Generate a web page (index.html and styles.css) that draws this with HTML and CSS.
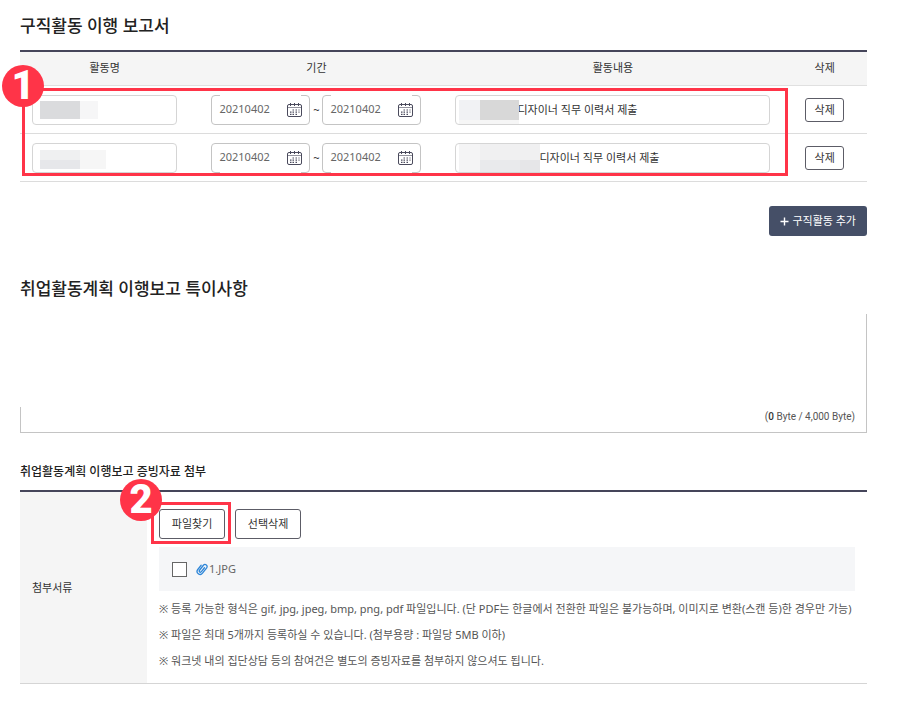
FILE: index.html
```
<!DOCTYPE html>
<html lang="ko">
<head>
<meta charset="utf-8">
<title>구직활동 이행 보고서</title>
<link rel="stylesheet" href="styles.css">
</head>
<body>
<svg class="sprite" aria-hidden="true">
  <symbol id="calendar" viewBox="0 0 16 16">
    <g fill="none" stroke="#4a4a5c">
      <rect x="1.5" y="2.5" width="14" height="12" rx="1.5"/>
      <path d="M2 5.5h13" stroke-opacity="0.6"/>
      <path d="M4.5 1v3M8.5 1v3M12.5 1v3"/>
      <path d="M6.5 8h1.5M9.5 8h1.5M12.5 8h1M4 10.2h1.5M6.5 10.2h1.5M9.5 10.2h1.5M12.5 10.2h1M4 12.4h1.5M6.5 12.4h1.5M9.5 12.4h1.5" stroke-width="1.2"/>
    </g>
  </symbol>
</svg>
<main class="page">
  <section class="report">
    <h1 class="title">구직활동 이행 보고서</h1>
    <div class="activity">
      <table class="grid">
        <colgroup><col class="col-name"><col class="col-period"><col class="col-content"><col class="col-delete"></colgroup>
        <thead>
          <tr><th scope="col">활동명</th><th scope="col">기간</th><th scope="col">활동내용</th><th scope="col">삭제</th></tr>
        </thead>
        <tbody>
          <tr>
            <td><div class="field">
              <input class="text" type="text" aria-label="활동명">
              <svg class="mosaic mosaic-name" width="66" height="18" aria-hidden="true"><path fill="#dadbdd" d="M0 0h40v18H0z"/><path fill="#f6f6f7" d="M40 0h18v18H40z"/></svg>
            </div></td>
            <td><div class="period">
              <span class="date open-top"><input type="text" value="20210402" aria-label="시작일"><button type="button" aria-label="시작일 선택"><svg width="16" height="16"><use href="#calendar"/></svg></button></span>
              <span class="tilde">~</span>
              <span class="date open-top"><input type="text" value="20210402" aria-label="종료일"><button type="button" aria-label="종료일 선택"><svg width="16" height="16"><use href="#calendar"/></svg></button></span>
            </div></td>
            <td><div class="field">
              <input class="text masked-short" type="text" value="디자이너 직무 이력서 제출" aria-label="활동내용">
              <svg class="mosaic mosaic-content" width="81" height="28" aria-hidden="true"><path fill="#f1f2f4" d="M0 4h21v20H0z"/><path fill="#d8d8d8" d="M21 4h39v20H21z"/><path fill="#f6f6f6" d="M0 24h60v4H0z"/></svg>
            </div></td>
            <td><button type="button" class="btn btn-small">삭제</button></td>
          </tr>
          <tr>
            <td><div class="field">
              <input class="text" type="text" aria-label="활동명">
              <svg class="mosaic mosaic-name" width="66" height="20" aria-hidden="true"><path fill="#eff0f1" d="M0 1h40v10H0z"/><path fill="#e6e7ea" d="M0 11h40v9H0z"/><path fill="#f6f6f6" d="M40 1h26v19H40z"/></svg>
            </div></td>
            <td><div class="period">
              <span class="date open-bottom"><input type="text" value="20210402" aria-label="시작일"><button type="button" aria-label="시작일 선택"><svg width="16" height="16"><use href="#calendar"/></svg></button></span>
              <span class="tilde">~</span>
              <span class="date open-bottom"><input type="text" value="20210402" aria-label="종료일"><button type="button" aria-label="종료일 선택"><svg width="16" height="16"><use href="#calendar"/></svg></button></span>
            </div></td>
            <td><div class="field">
              <input class="text masked-long" type="text" value="디자이너 직무 이력서 제출" aria-label="활동내용">
              <svg class="mosaic mosaic-content" width="81" height="28" aria-hidden="true"><path fill="#f4f4f5" d="M0 0h21v28H0z"/><path fill="#f0f0f1" d="M21 0h60v16H21z"/><path fill="#e9eaec" d="M21 16h40v12H21z"/><path fill="#e6e6e8" d="M61 16h20v12H61z"/></svg>
            </div></td>
            <td><button type="button" class="btn btn-small">삭제</button></td>
          </tr>
        </tbody>
      </table>
      <div class="callout callout-rows"><span class="badge">1</span></div>
    </div>
    <div class="actions"><button type="button" class="btn-add"><svg width="9" height="9" viewBox="0 0 9 9" aria-hidden="true"><path d="M4.5 0.5v8M0.5 4.5h8" stroke="#fff" stroke-width="1.4"/></svg>구직활동 추가</button></div>
  </section>

  <section class="remarks">
    <h2 class="title"><label for="remarks">취업활동계획 이행보고 특이사항</label></h2>
    <div class="memo">
      <textarea id="remarks"></textarea>
      <p class="counter">(<b>0</b> Byte / 4,000 Byte)</p>
    </div>
  </section>

  <section class="files">
    <h3 class="subtitle">취업활동계획 이행보고 증빙자료 첨부</h3>
    <table class="attach">
      <tbody>
        <tr>
          <th scope="row">첨부서류</th>
          <td>
            <div class="buttons">
              <span class="marked"><button type="button" class="btn">파일찾기</button><span class="callout callout-find"><span class="badge">2</span></span></span>
              <button type="button" class="btn">선택삭제</button>
            </div>
            <div class="file">
              <input type="checkbox" id="file1">
              <svg width="12" height="14" viewBox="0 0 12 14" aria-hidden="true"><g transform="rotate(38 6 7)" fill="none" stroke="#2e86d8" stroke-width="1.3" stroke-linecap="round"><path d="M3 4.5v5.5a3 3 0 0 0 6 0V3.2a2.1 2.1 0 0 0-4.2 0v6.3a1.2 1.2 0 0 0 2.4 0V4.5"/></g></svg>
              <label for="file1">1.JPG</label>
            </div>
            <ul class="notes">
              <li>※ 등록 가능한 형식은 gif, jpg, jpeg, bmp, png, pdf 파일입니다. (단 PDF는 한글에서 전환한 파일은 불가능하며, 이미지로 변환(스캔 등)한 경우만 가능)</li>
              <li>※ 파일은 최대 5개까지 등록하실 수 있습니다. (첨부용량 : 파일당 5MB 이하)</li>
              <li>※ 워크넷 내의 집단상담 등의 참여건은 별도의 증빙자료를 첨부하지 않으셔도 됩니다.</li>
            </ul>
          </td>
        </tr>
      </tbody>
    </table>
  </section>
</main>
</body>
</html>
```
FILE: styles.css
```
* { box-sizing: border-box; }

body {
  margin: 0;
  background: #fff;
  color: #333;
  font: 11px/16px "Noto Sans", "Noto Sans CJK KR", sans-serif;
}

input, button, textarea {
  margin: 0;
  color: inherit;
  font: inherit;
}

button { cursor: pointer; }

.sprite { position: absolute; width: 0; height: 0; }

.page { padding: 13px 30px 18px 20px; }

.title {
  margin: 0;
  color: #222;
  font-size: 17px;
  font-weight: 500;
  line-height: 26px;
}

/* Activity table */
.activity { position: relative; margin-top: 11px; }

.grid {
  width: 100%;
  table-layout: fixed;
  border-collapse: separate;
  border-spacing: 0;
  border-top: 2px solid #45455a;
}

.col-name { width: 20%; }
.col-period { width: 30%; }
.col-content { width: 40%; }
.col-delete { width: 10%; }

.grid th {
  height: 34px;
  padding: 0 0 2px;
  border-bottom: 1px solid #e0e0e0;
  background: #f5f5f5;
  font-weight: 400;
}

.grid td {
  padding: 9px 12px 8px;
  border-bottom: 1px solid #dcdcdc;
  text-align: center;
}

.field { position: relative; }

.text {
  display: block;
  width: 100%;
  height: 30px;
  padding: 0 8px 2px;
  border: 1px solid #d5d5d5;
  border-radius: 4px;
  background: #fff;
}

.masked-short { padding-left: 61px; }
.masked-long { padding-left: 83px; }

.mosaic { position: absolute; }
.mosaic-name { top: 6px; left: 8px; }
.mosaic-content { top: 1px; left: 4px; }

.period {
  display: flex;
  align-items: center;
  justify-content: center;
}

.tilde { width: 12px; }

.date {
  position: relative;
  display: flex;
  align-items: center;
  width: 99px;
  height: 30px;
  padding: 0 7px;
  border: 1px solid #c4c4c4;
  border-radius: 4px;
}

.date::after {
  content: "";
  position: absolute;
  left: 8px;
  right: 8px;
  height: 1px;
  background: #fff;
}

.open-top::after { top: -1px; }
.open-bottom::after { bottom: -1px; }

.date input {
  flex: 1;
  min-width: 0;
  padding: 0 0 2px;
  border: 0;
  background: none;
  color: #666;
}

.date button {
  display: flex;
  padding: 0;
  border: 0;
  background: none;
}

.btn {
  min-width: 66px;
  height: 30px;
  padding: 0 8px;
  border: 1px solid #5c5c66;
  border-radius: 3px;
  background: #fff;
}

.btn-small { min-width: 39px; height: 24px; }

.actions {
  display: flex;
  justify-content: flex-end;
  margin-top: 24px;
}

.btn-add {
  display: flex;
  align-items: center;
  gap: 3px;
  height: 30px;
  padding: 0 11px;
  border: 0;
  border-radius: 3px;
  background: #454f67;
  color: #fff;
}

/* Numbered highlights */
.callout {
  position: absolute;
  border: 3px solid #ff3448;
  pointer-events: none;
}

.callout-rows { top: 38px; right: 79px; bottom: 6px; left: 2px; }
.callout-find { top: -7px; right: -6px; bottom: -5px; left: -8px; }

.badge {
  position: absolute;
  top: -26px;
  left: -23px;
  width: 42px;
  height: 42px;
  border-radius: 50%;
  background: #ff3448;
  color: #fff;
  font: 900 40px/42px Roboto, sans-serif;
  text-align: center;
}

.callout-find .badge { left: -34px; }

/* Remarks */
.remarks { margin-top: 40px; }

.memo {
  margin-top: 12px;
  border-right: 1px solid #c4c4c4;
  border-bottom: 1px solid #c4c4c4;
}

.memo textarea {
  display: block;
  width: 100%;
  height: 93px;
  padding: 8px 12px;
  border: 0;
  background: none;
  resize: none;
}

.counter {
  margin: 0;
  padding: 2px 11px 7px;
  border-left: 1px solid #c4c4c4;
  color: #555;
  font: 10px/16px Roboto, sans-serif;
  text-align: right;
}

.counter b { color: #333; font-weight: 500; }

/* Attachments */
.files { margin-top: 29px; }

.subtitle {
  margin: 0;
  color: #222;
  font-size: 12px;
  font-weight: 500;
  line-height: 20px;
}

.attach {
  width: 100%;
  margin-top: 8px;
  border-collapse: separate;
  border-spacing: 0;
  border-top: 2px solid #45455a;
  border-bottom: 1px solid #d5d5d5;
}

.attach th {
  width: 15%;
  padding: 0 12px;
  background: #f5f5f5;
  font-weight: 400;
  text-align: left;
}

.attach td { padding: 17px 12px 9px; }

.buttons { display: flex; gap: 10px; }

.marked { position: relative; display: flex; }

.file {
  display: flex;
  align-items: center;
  height: 44px;
  margin-top: 8px;
  padding: 0 13px;
  background: #f5f6f8;
  color: #666;
}

.file input {
  appearance: none;
  width: 15px;
  height: 15px;
  margin-right: 9px;
  border: 1px solid #666;
  background: #fff;
}

.file label { margin-left: 1px; }

.notes {
  margin: 5px 0 0;
  padding: 0;
  list-style: none;
  color: #555;
  line-height: 26px;
}
```
